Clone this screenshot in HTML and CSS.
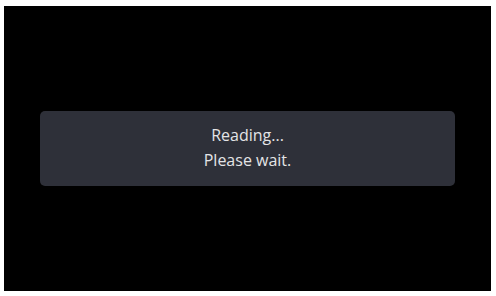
FILE: index.html
```html
<!DOCTYPE html>
<html>
<head>
<meta charset="utf-8">
<link rel="stylesheet" href="styles.css">
</head>
<body>
<div class="screen">
  <div class="dialog">
    <div class="line">Reading...</div>
    <div class="line">Please wait.</div>
  </div>
</div>
</body>
</html>
```
FILE: styles.css
```css
html, body {
  margin: 0;
  padding: 0;
  background: #ffffff;
  width: 496px;
  height: 296px;
  overflow: hidden;
}
.screen {
  box-sizing: border-box;
  margin: 6px 5px 0 4px;
  width: 487px;
  height: 285px;
  background: #000000;
  display: flex;
  align-items: center;
  justify-content: center;
}
.dialog {
  width: 415px;
  height: 75px;
  box-sizing: border-box;
  padding-bottom: 2px;
  background: #2e3039;
  border-radius: 5px;
  display: flex;
  flex-direction: column;
  justify-content: center;
  align-items: center;
  color: #e4e4e6;
  font-family: "Open Sans", "Noto Sans", sans-serif;
  font-size: 16px;
  line-height: 25px;
}
```
